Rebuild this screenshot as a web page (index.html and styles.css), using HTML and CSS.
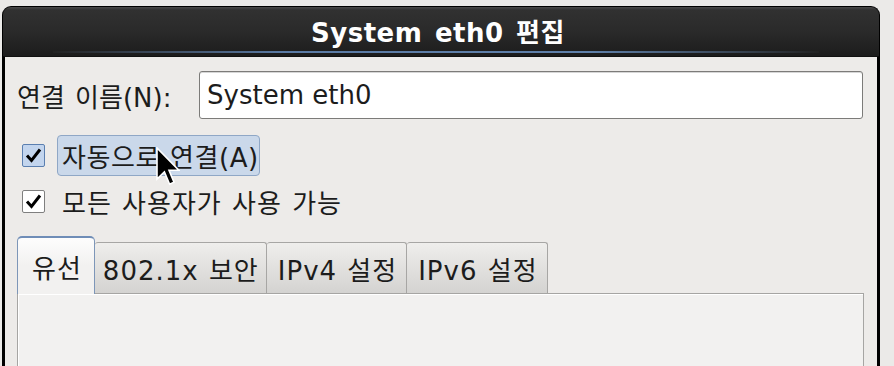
FILE: index.html
```html
<!DOCTYPE html>
<html lang="ko">
<head>
  <meta charset="UTF-8" />
  <title>System eth0 편집</title>
  <link rel="stylesheet" href="styles.css">
</head>
<body>
  <div class="window">
    <div class="titlebar">
      <span class="title">System eth0 편집</span>
    </div>
    <div class="content">
      <div class="name-row">
        <label class="name-label">연결 이름(N):</label>
        <div class="entry">System eth0</div>
      </div>

      <div class="check-row">
        <span class="check hot">
          <svg width="21" height="21" viewBox="0 0 21 21"><path d="M4 10.5 L8.5 15.5 L17 4.5" fill="none" stroke="#000" stroke-width="3" /></svg>
        </span>
        <span class="check-label hot">자동으로 연결(A)</span>
      </div>
      <div class="check-row second">
        <span class="check">
          <svg width="21" height="21" viewBox="0 0 21 21"><path d="M4 10.5 L8.5 15.5 L17 4.5" fill="none" stroke="#000" stroke-width="3" /></svg>
        </span>
        <span class="check-label">모든 사용자가 사용 가능</span>
      </div>

      <div class="tabs">
        <div class="tab active">유선</div>
        <div class="tab wide">802.1x 보안</div>
        <div class="tab">IPv4 설정</div>
        <div class="tab">IPv6 설정</div>
      </div>
      <div class="panel"></div>
    </div>
  </div>

  <!-- mouse pointer over the checkbox label -->
  <svg class="cursor" width="24" height="40" viewBox="0 0 12 20">
    <path d="M0.5 0.5 L0.5 16 L4.2 12.4 L6.8 18.6 L9 17.6 L6.5 11.6 L11.4 11.6 Z" fill="#000" stroke="#fff" stroke-width="0.8" />
  </svg>
</body>
</html>
```

FILE: styles.css
```css
body {
  margin: 0;
  height: 366px;
  overflow: hidden;
  background-color: #ebeae8;
  font-family: "DejaVu Sans", "Noto Sans CJK KR", sans-serif;
  font-size: 26px;
  color: #1c1c1c;
  position: relative;
}
.window {
  margin: 6px 0 0 2px;
  width: 878px;
}
.titlebar {
  position: relative;
  height: 49px;
  border: 1px solid #000;
  border-bottom: none;
  border-radius: 9px 9px 0 0;
  background: linear-gradient(#4a4a4a 0, #313131 3px, #2a2a2a 50%, #1c1c1c 100%);
  display: flex;
  align-items: center;
  justify-content: center;
}
.titlebar::after {
  content: "";
  position: absolute;
  left: 50px;
  right: 60px;
  bottom: 3px;
  height: 2px;
  background: linear-gradient(90deg, #222, #5a7aa4 30%, #5f80aa 70%, #222);
}
.title {
  color: #fff;
  font-weight: bold;
  word-spacing: 3px;
  letter-spacing: 0.5px;
  margin: 0 6px 3px 0;
}
.content {
  height: 295px;
  background-color: #edebe9;
  border-top: 1px solid #111;
  border-left: 3px solid #000;
  border-right: 3px solid #000;
  padding: 14px 14px 0 12px;
}
.name-row {
  display: flex;
  align-items: center;
  height: 48px;
}
.name-label {
  width: 182px;
  word-spacing: 2px;
}
.entry {
  flex: 1;
  height: 46px;
  border: 1px solid #7c7b79;
  border-radius: 3px;
  background: #fff;
  box-shadow: inset 0 1px 0 #d6d6d6;
  padding-left: 7px;
  display: flex;
  align-items: center;
}
.check-row {
  display: flex;
  align-items: center;
  height: 41px;
  margin-top: 16px;
}
.check-row.second {
  margin-top: 5px;
}
.check {
  width: 21px;
  height: 21px;
  border: 1px solid #7f7f7f;
  border-radius: 2px;
  background: #fff;
  margin-left: 5px;
  margin-right: 12px;
  display: flex;
}
.check.hot {
  border-color: #5b7fb0;
  background: #c3d5ee;
}
.check-label {
  height: 39px;
  padding: 0 4px;
  border: 1px solid transparent;
  border-radius: 4px;
  display: flex;
  align-items: center;
  word-spacing: 1px;
  letter-spacing: 1px;
}
.check-label.hot {
  padding-right: 0;
  letter-spacing: 0.6px;
  background: #cad8ea;
  border-color: #8fa7c6;
}
.tabs {
  display: flex;
  align-items: flex-end;
  height: 57px;
  margin-top: 14px;
  position: relative;
  z-index: 1;
  word-spacing: 1px;
  letter-spacing: 1px;
}
.tab {
  height: 50px;
  padding: 0 9px 0 11px;
  border: 1px solid #a7a6a4;
  border-left: none;
  border-bottom: none;
  border-radius: 3px 3px 0 0;
  background: linear-gradient(#efeeec, #d4d3d1);
  display: flex;
  align-items: center;
}
.tab.wide {
  padding: 0 7px 0 8px;
}
.tab.active {
  height: 56px;
  margin-bottom: -1px;
  padding: 0 12px 0 14px;
  border: 1px solid #7d96b8;
  border-top: 2px solid #6f8db7;
  border-bottom: none;
  border-radius: 5px 5px 0 0;
  background: linear-gradient(#fdfdfd, #f2f1f0 28px);
}
.panel {
  height: 73px;
  width: 845px;
  border: 1px solid #a6a5a3;
  border-bottom: none;
  background: #f2f1f0;
  box-shadow: inset 1px 1px 0 #fff;
}
.cursor {
  position: absolute;
  left: 156px;
  top: 147px;
}
```
